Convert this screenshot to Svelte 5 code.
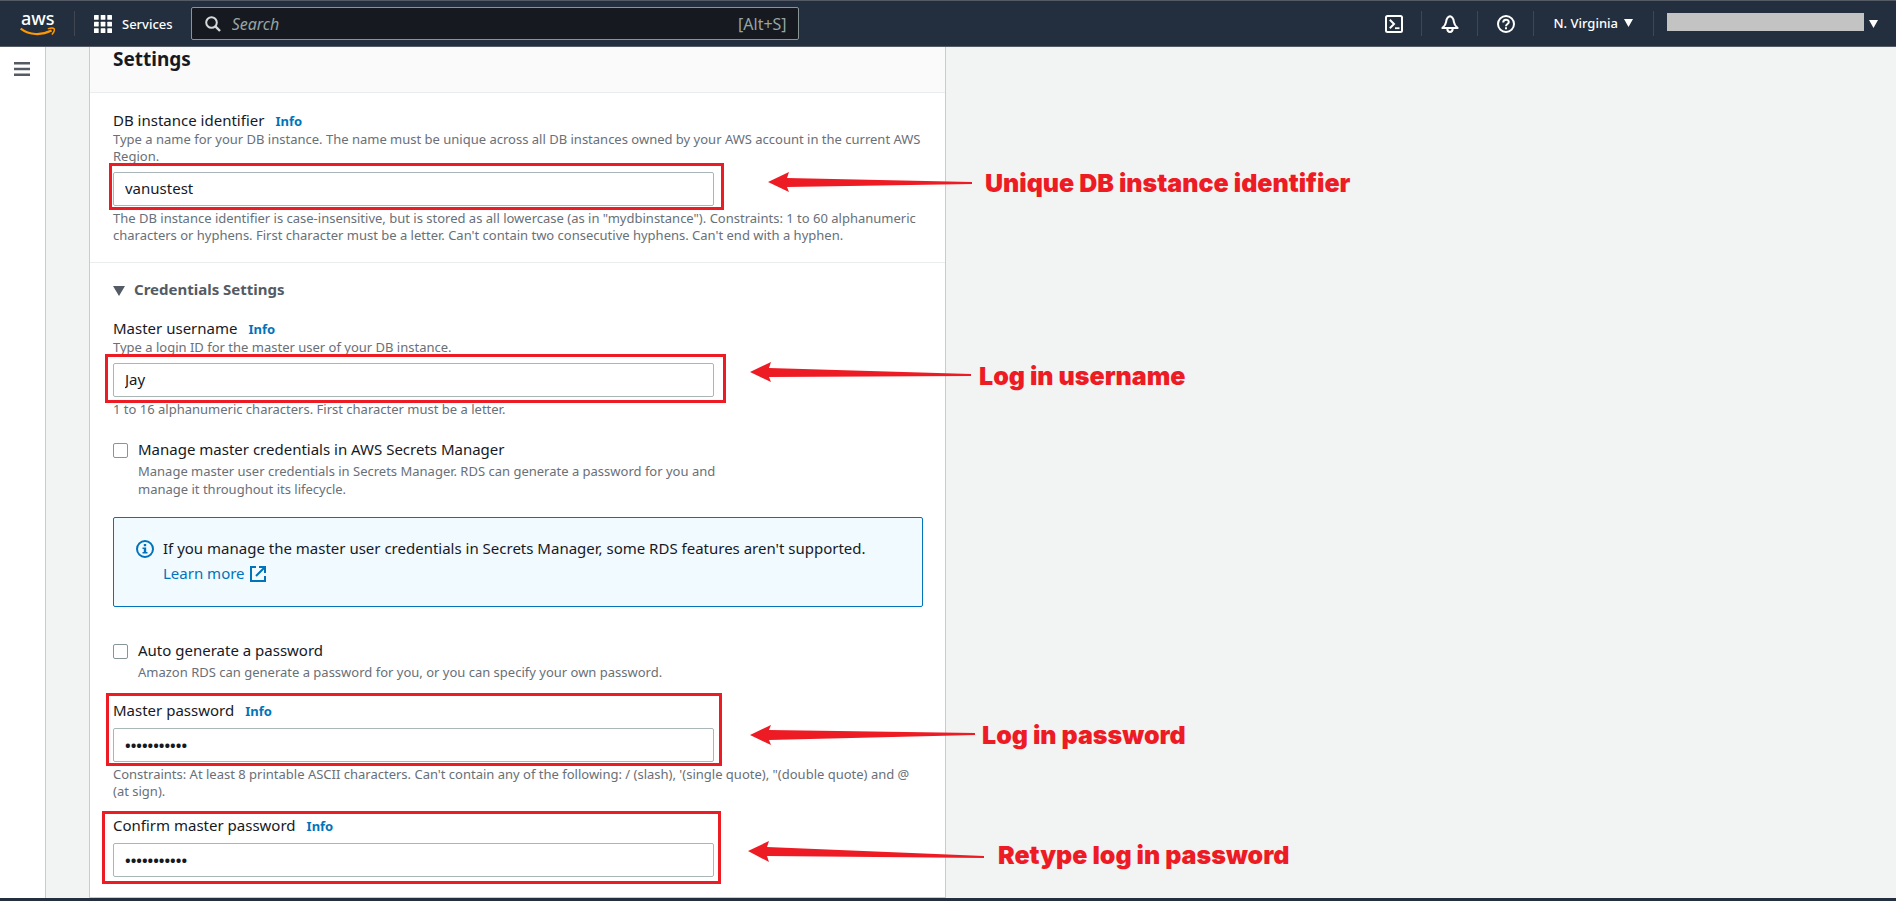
<script>
  let identifier = $state('vanustest');
  let username = $state('Jay');
  let password = $state('vanuspass12');
  let confirmation = $state('vanuspass12');
  let manageSecrets = $state(false);
  let autoGenerate = $state(false);
</script>

<div class="page">
  <header class="topbar">
    <a class="logo" href="#home" aria-label="AWS home">
      <svg width="38" height="38" viewBox="0 -6 38 38" aria-hidden="true">
        <text x="1" y="14" class="logo-text">aws</text>
        <path d="M0.600 17.600C9.500 24.400 21.500 24.600 31.600 19.600" fill="none" stroke="#f90" stroke-width="2.200" />
        <path d="M28.400 17.600c2.300-.7 5-.7 5.700.1.500.9-.3 3.600-1.800 5.400" fill="none" stroke="#f90" stroke-width="1.500" stroke-linecap="round" />
      </svg>
    </a>
    <span class="rule"></span>
    <button class="services" type="button">
      <svg width="18" height="18" viewBox="0 0 18 18" fill="#fff" aria-hidden="true">
        {#each [0, 6.7, 13.3] as y}
          {#each [0, 6.7, 13.3] as x}
            <rect {x} {y} width="4.700" height="4.700" rx="0.500" />
          {/each}
        {/each}
      </svg>
      Services
    </button>
    <label class="search">
      <svg width="16" height="16" viewBox="0 0 16 16" fill="none" stroke="#d5dbdb" stroke-width="2" aria-hidden="true">
        <circle cx="6.500" cy="6.500" r="5.300" />
        <path d="M10.400 10.400L15 15" stroke-width="2.400" />
      </svg>
      <input type="search" placeholder="Search" aria-label="Search" />
      <span>[Alt+S]</span>
    </label>
    <nav class="tools">
      <button class="tool" type="button" aria-label="CloudShell">
        <svg width="18" height="18" viewBox="0 0 18 18" fill="none" stroke="#fff" stroke-width="2" aria-hidden="true">
          <rect x="1" y="1" width="16" height="16" rx="1.500" />
          <path d="M4.800 4.800L9 9l-4.200 4.200" />
          <path d="M10 13.200h4.500" stroke-width="1.800" />
        </svg>
      </button>
      <span class="rule"></span>
      <button class="tool" type="button" aria-label="Notifications">
        <svg width="18" height="18" viewBox="0 0 18 18" fill="none" stroke="#fff" stroke-width="2" stroke-linejoin="round" aria-hidden="true">
          <path d="M9 1.200C6.600 1.800 5.400 3.800 5.100 6.800 4.800 9.600 3.400 11.200 1.400 13h15.200c-2-1.800-3.400-3.400-3.700-6.200C12.600 3.800 11.400 1.800 9 1.200z" />
          <path d="M6.300 13.500c0 4.600 5.400 4.600 5.400 0" />
        </svg>
      </button>
      <span class="rule"></span>
      <button class="tool" type="button" aria-label="Help">
        <svg width="18" height="18" viewBox="0 0 18 18" fill="none" stroke="#fff" stroke-width="2" aria-hidden="true">
          <circle cx="9" cy="9" r="8" />
          <path d="M6.200 7.400c0-3.600 5.600-3.600 5.600-.3 0 2-2.800 1.900-2.800 4.100M9 12.200v2" />
        </svg>
      </button>
      <span class="rule"></span>
      <button class="region" type="button">
        N. Virginia
        <svg width="9" height="8" viewBox="0 0 9 8" aria-hidden="true"><path d="M0 0h9L4.500 8z" fill="#fff" /></svg>
      </button>
      <span class="rule"></span>
      <button class="account" type="button" aria-label="Account">
        <span class="redacted"></span>
        <svg width="9" height="8" viewBox="0 0 9 8" aria-hidden="true"><path d="M0 0h9L4.500 8z" fill="#fff" /></svg>
      </button>
    </nav>
  </header>

  <div class="body">
    <aside class="rail">
      <button type="button" aria-label="Open navigation">
        <svg width="16" height="14" viewBox="0 0 16 14" fill="#545b64" aria-hidden="true">
          <path d="M0 0h16v2.500H0zM0 5.750h16v2.500H0zM0 11.500h16V14H0z" />
        </svg>
      </button>
    </aside>

    <main>
      <form class="panel">
        <h2>Settings</h2>

        <section class="first">
          <div class="field">
            <div class="caption"><label for="identifier">DB instance identifier</label><a href="#info">Info</a></div>
            <p>Type a name for your DB instance. The name must be unique across all DB instances owned by your AWS account in the current AWS Region.</p>
            <input id="identifier" type="text" bind:value={identifier} />
            <p class="note">The DB instance identifier is case-insensitive, but is stored as all lowercase (as in "mydbinstance"). Constraints: 1 to 60 alphanumeric characters or hyphens. First character must be a letter. Can't contain two consecutive hyphens. Can't end with a hyphen.</p>
          </div>
        </section>

        <section>
          <button class="expander" type="button">
            <svg width="12" height="10" viewBox="0 0 12 10" aria-hidden="true"><path d="M0 0h12L6 10z" fill="#545b64" /></svg>
            Credentials Settings
          </button>

          <div class="field">
            <div class="caption"><label for="username">Master username</label><a href="#info">Info</a></div>
            <p>Type a login ID for the master user of your DB instance.</p>
            <input id="username" type="text" bind:value={username} />
            <p class="note">1 to 16 alphanumeric characters. First character must be a letter.</p>
          </div>

          <div class="choice">
            <input id="secrets" type="checkbox" bind:checked={manageSecrets} />
            <div>
              <label for="secrets">Manage master credentials in AWS Secrets Manager</label>
              <p>Manage master user credentials in Secrets Manager. RDS can generate a password for you and manage it throughout its lifecycle.</p>
            </div>
          </div>

          <div class="alert">
            <svg width="18" height="18" viewBox="0 0 18 18" aria-hidden="true">
              <circle cx="9" cy="9" r="8" fill="none" stroke="#0073bb" stroke-width="2" />
              <path d="M7.800 4h2.400v2.200H7.800zM6.500 7.500h3.700v4.500h1.300v1.600h-5V12h1.300V9.100H6.500z" fill="#0073bb" />
            </svg>
            <div>
              If you manage the master user credentials in Secrets Manager, some RDS features aren't supported.
              <a href="#learn">Learn more
                <svg width="16" height="16" viewBox="0 0 16 16" fill="none" stroke="#0073bb" stroke-width="2" aria-hidden="true">
                  <path d="M6 1H1v14h14v-5M9 1h6v6M15 1L6 10" />
                </svg></a>
            </div>
          </div>

          <div class="choice">
            <input id="auto" type="checkbox" bind:checked={autoGenerate} />
            <div>
              <label for="auto">Auto generate a password</label>
              <p>Amazon RDS can generate a password for you, or you can specify your own password.</p>
            </div>
          </div>

          <div class="field">
            <div class="caption"><label for="password">Master password</label><a href="#info">Info</a></div>
            <input id="password" type="password" autocomplete="off" bind:value={password} />
            <p class="note">Constraints: At least 8 printable ASCII characters. Can't contain any of the following: / (slash), '(single quote), "(double quote) and @ (at sign).</p>
          </div>

          <div class="field last">
            <div class="caption"><label for="confirm">Confirm master password</label><a href="#info">Info</a></div>
            <input id="confirm" type="password" autocomplete="off" bind:value={confirmation} />
          </div>
        </section>
      </form>
    </main>
  </div>

  <footer></footer>

  <div class="marks">
    <svg width="1400" height="901" viewBox="0 0 1400 901" aria-hidden="true">
      <g fill="none" stroke="#ed1c24" stroke-width="3">
        <rect x="110.500" y="164.500" width="612" height="44" />
        <rect x="106.500" y="355.500" width="618" height="46" />
        <rect x="107.500" y="694.500" width="613" height="70" />
        <rect x="103.500" y="812.500" width="616" height="70" />
      </g>
      <g fill="#ed1c24">
        <path d="M768 182l21-10-2 6 185 4v2l-185 3 2 5z" />
        <path d="M750 372l21-10-2 6 202 6v2l-202 1 2 5z" />
        <path d="M750 735l21-10-2 5 206 3v2l-206 5 2 5z" />
        <path d="M748 851l21-10-2 6 217 9v2l-217-2 2 6z" />
      </g>
    </svg>
    <span class="mark m1">Unique DB instance identifier</span>
    <span class="mark m2">Log in username</span>
    <span class="mark m3">Log in password</span>
    <span class="mark m4">Retype log in password</span>
  </div>
</div>

<style>
  :global(body) {
    margin: 0;
    background: #f2f3f3;
  }

  .page,
  .page :global(*) {
    box-sizing: border-box;
  }

  .page {
    position: relative;
    display: flex;
    flex-direction: column;
    min-height: 100vh;
    overflow: hidden;
    color: #16191f;
    font: 15px/20px 'Noto Sans', sans-serif;
  }

  button,
  input {
    font: inherit;
    color: inherit;
  }

  button {
    padding: 0;
    border: 0;
    background: none;
    cursor: pointer;
  }

  a {
    color: #0073bb;
    text-decoration: none;
  }

  svg {
    display: block;
    flex: none;
  }

  .topbar {
    display: flex;
    align-items: center;
    height: 47px;
    padding: 0 18px 0 20px;
    border-top: 1px solid #545b64;
    border-bottom: 1px solid #545b64;
    background: #232f3e;
    color: #fff;
    font-size: 13px;
  }

  .logo-text {
    fill: #fff;
    font: 500 18px 'Noto Sans', sans-serif;
  }

  .rule {
    width: 1px;
    height: 25px;
    background: #414750;
  }

  .logo {
    margin-right: 16px;
  }

  .services {
    display: flex;
    align-items: center;
    gap: 10px;
    margin: 0 18px 0 19px;
    font-weight: 500;
  }

  .search {
    display: flex;
    align-items: center;
    gap: 11px;
    width: 608px;
    height: 33px;
    padding: 0 11px 0 13px;
    border: 1px solid #879596;
    border-radius: 2px;
    background: #16191f;
    color: #95a5a6;
    font-size: 16px;
  }

  .search input {
    flex: 1;
    min-width: 0;
    padding: 0;
    border: 0;
    outline: 0;
    background: none;
  }

  .search input::placeholder {
    color: #95a5a6;
    font-style: italic;
    opacity: 1;
  }

  .tools {
    display: flex;
    align-items: center;
    margin-left: auto;
  }

  .tool {
    margin: 0 18px 0 19px;
  }

  .region {
    display: flex;
    align-items: center;
    gap: 6px;
    margin: 0 20px 2px 19px;
    font-weight: 500;
  }

  .account {
    display: flex;
    align-items: center;
    gap: 5px;
    margin-left: 13px;
  }

  .redacted {
    width: 197px;
    height: 18px;
    margin-bottom: 3px;
    background: #c3c3c3;
  }

  .body {
    display: flex;
    flex: 1;
  }

  .rail {
    width: 46px;
    padding: 15px 14px;
    border-right: 1px solid #c8cccc;
    background: #fff;
  }

  .rail button {
    display: block;
  }

  main {
    flex: 1;
    padding-left: 43px;
  }

  .panel {
    max-width: 857px;
    border: 1px solid #c8cccc;
    border-top: 0;
    background: #fff;
  }

  h2 {
    margin: 0;
    padding: 1px 23px 22px;
    border-bottom: 1px solid #eaeded;
    background: #fafafa;
    font-size: 19px;
    font-weight: 700;
    line-height: 22px;
  }

  section {
    padding: 16px 22px 20px 23px;
  }

  .first {
    padding: 17px 22px 18px 23px;
    border-bottom: 1px solid #eaeded;
  }

  p {
    margin: 0;
    color: #687078;
    font-size: 13px;
    line-height: 17px;
  }

  .caption {
    display: flex;
    align-items: baseline;
    gap: 11px;
  }

  .caption a {
    font-size: 13px;
    font-weight: 700;
  }

  .field input {
    display: block;
    width: 100%;
    max-width: 601px;
    height: 34px;
    margin-top: 7px;
    padding: 0 11px;
    border: 1px solid #aab7b8;
    border-radius: 2px;
    background: #fff;
  }

  .field input[type='text'] {
    padding-bottom: 2px;
  }

  .field input[type='password'] {
    font-weight: 700;
  }

  .note {
    margin-top: 4px;
  }

  .expander {
    display: flex;
    align-items: center;
    gap: 9px;
    margin-bottom: 19px;
    color: #545b64;
    font-weight: 700;
  }

  .expander svg {
    margin-top: 3px;
  }

  .choice {
    display: flex;
    gap: 10px;
    margin: 21px 0 19px;
  }

  .choice input {
    appearance: none;
    flex: none;
    width: 15px;
    height: 15px;
    margin: 4px 0 0;
    border: 1px solid #879596;
    border-radius: 2px;
    background: #fff;
  }

  .choice input:checked {
    border-color: #0073bb;
    background: #0073bb;
  }

  .choice label {
    display: block;
  }

  .choice p {
    max-width: 600px;
    margin-top: 3px;
    line-height: 18px;
  }

  .alert {
    display: flex;
    gap: 9px;
    margin-bottom: 33px;
    padding: 18px 22px 20px;
    border: 1px solid #0073bb;
    border-radius: 2px;
    background: #f1faff;
    line-height: 25px;
  }

  .alert > svg {
    margin-top: 4px;
  }

  .alert a {
    display: flex;
    align-items: center;
    gap: 5px;
  }

  .last {
    margin-top: 15px;
  }

  footer {
    height: 3px;
    background: #232f3e;
  }

  .marks {
    position: absolute;
    top: 0;
    left: 0;
    pointer-events: none;
  }

  .mark {
    position: absolute;
    color: #ed1c24;
    font: 900 25px/32px Inter, sans-serif;
    white-space: nowrap;
  }

  .m1 {
    top: 167px;
    left: 985px;
  }

  .m2 {
    top: 360px;
    left: 979px;
  }

  .m3 {
    top: 719px;
    left: 982px;
  }

  .m4 {
    top: 839px;
    left: 998px;
  }
</style>
